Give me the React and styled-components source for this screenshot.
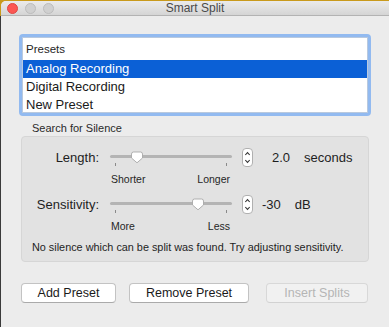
import React from 'react';
import styled, { createGlobalStyle } from 'styled-components';

const Global = createGlobalStyle`
  html, body {
    margin: 0;
    padding: 0;
  }
  body {
    width: 389px;
    height: 327px;
    overflow: hidden;
    background: linear-gradient(to bottom, #c99a1c 0, #c99a1c 16px, #3a3a3a 16px);
    font-family: "Liberation Sans", Arial, sans-serif;
  }
`;

const Window = styled.div`
  margin: 1px 0 0 1px;
  height: 326px;
  background: #ececec;
  border-top-left-radius: 5px;
  display: flex;
  flex-direction: column;
  color: #222;
`;

const TitleBar = styled.div`
  height: 14px;
  border-bottom: 1px solid #b3b3b3;
  background: linear-gradient(to bottom, #ebebeb, #d5d5d5);
  border-top-left-radius: 5px;
  display: flex;
  align-items: center;
  position: relative;
`;

const Lights = styled.div`
  display: flex;
  gap: 7px;
  padding-left: 6px;
`;

const Light = styled.span`
  width: 11px;
  height: 11px;
  border-radius: 50%;
  box-sizing: border-box;
  background: ${p => (p.red ? '#fc5753' : '#d0d0d0')};
  border: 1px solid ${p => (p.red ? '#df4744' : '#bdbdbd')};
`;

const Title = styled.div`
  position: absolute;
  left: 0;
  right: 0;
  text-align: center;
  font-size: 12px;
  color: #4a4a4a;
  line-height: 14px;
`;

const Body = styled.div`
  padding: 18px 18px 0 18px;
  display: flex;
  flex-direction: column;
`;

const ListRing = styled.div`
  width: 352px;
  height: 82px;
  box-sizing: border-box;
  border: 3px solid #92baf0;
  border-radius: 4px;
`;

const List = styled.div`
  height: 100%;
  box-sizing: border-box;
  background: #fff;
  border: 1px solid #b9c9de;
  overflow: hidden;
`;

const ListHeader = styled.div`
  height: 22px;
  padding-left: 3px;
  font-size: 11.5px;
  line-height: 22px;
  color: #262626;
`;

const ListRow = styled.div`
  height: 18px;
  padding-left: 3px;
  font-size: 13px;
  line-height: 18px;
  background: ${p => (p.selected ? '#0b60d6' : 'transparent')};
  color: ${p => (p.selected ? '#fff' : '#1a1a1a')};
`;

const GroupTitle = styled.div`
  margin: 5px 0 0 13px;
  font-size: 11px;
  line-height: 14px;
  color: #2a2a2a;
`;

const Group = styled.div`
  margin: 1px 2px 0 2px;
  height: 126px;
  box-sizing: border-box;
  background: #e2e2e2;
  border: 1px solid #d6d6d6;
  border-radius: 4px;
  padding-top: 11px;
  display: flex;
  flex-direction: column;
`;

const Row = styled.div`
  display: flex;
  align-items: flex-start;
  margin-bottom: ${p => p.gap || 0}px;
`;

const Label = styled.div`
  width: 77px;
  text-align: right;
  font-size: 13px;
  line-height: 19px;
  color: #1e1e1e;
`;

const SliderBox = styled.div`
  margin-left: 11px;
  width: 122px;
  display: flex;
  flex-direction: column;
`;

const TrackArea = styled.div`
  position: relative;
  height: 19px;
`;

const Track = styled.div`
  position: absolute;
  left: 0;
  right: 0;
  top: 7px;
  height: 3px;
  border-radius: 2px;
  background: #b4b4b4;
`;

const Tick = styled.div`
  position: absolute;
  top: 15px;
  left: ${p => p.x}px;
  width: 1px;
  height: 3px;
  background: #8a8a8a;
`;

const Thumb = styled.svg`
  position: absolute;
  top: 3px;
  left: ${p => p.x - 7}px;
`;

const Ends = styled.div`
  display: flex;
  justify-content: space-between;
  padding: 6px 2px 0 1px;
  font-size: 10.5px;
  line-height: 12px;
  color: #262626;
`;

const Stepper = styled.svg`
  margin-left: 10px;
  flex-shrink: 0;
`;

const Value = styled.div`
  margin-left: ${p => p.lead}px;
  font-size: 13px;
  line-height: 19px;
  color: #1e1e1e;
`;

const Unit = styled.div`
  margin-left: 14px;
  font-size: 13px;
  line-height: 19px;
  color: #1e1e1e;
`;

const Message = styled.div`
  margin: 0 0 0 10px;
  font-size: 10.85px;
  line-height: 14px;
  color: #1e1e1e;
  white-space: nowrap;
`;

const Buttons = styled.div`
  margin: 21px 0 0 2px;
  display: flex;
`;

const Button = styled.button`
  width: ${p => p.w}px;
  margin-left: ${p => p.lead || 0}px;
  height: 20px;
  padding: 0;
  box-sizing: border-box;
  font-family: "Liberation Sans", Arial, sans-serif;
  font-size: 12.5px;
  border-radius: 4px;
  background: ${p => (p.disabled ? '#f1f1f1' : '#fff')};
  color: ${p => (p.disabled ? '#b5b5b5' : '#1a1a1a')};
  border: 1px solid ${p => (p.disabled ? '#d8d8d8' : '#c3c3c3')};
  border-bottom-color: ${p => (p.disabled ? '#d2d2d2' : '#aaaaaa')};
`;

function ThumbIcon({ x }) {
  return (
    <Thumb x={x} width="14" height="13" viewBox="0 0 14 13">
      <path
        d="M1.5 3 Q1.5 1 3.5 1 H10.5 Q12.5 1 12.5 3 V7 L7 11.8 L1.5 7 Z"
        fill="#fff"
        stroke="#a8a8a8"
        strokeWidth="0.9"
      />
    </Thumb>
  );
}

function StepperIcon() {
  return (
    <Stepper width="11" height="19" viewBox="0 0 11 19">
      <rect x="0.5" y="0.5" width="10" height="18" rx="3.5" fill="#fff" stroke="#b0b0b0" />
      <path d="M3.3 7 L5.5 4.6 L7.7 7" fill="none" stroke="#333" strokeWidth="1.1" />
      <path d="M3.3 12 L5.5 14.4 L7.7 12" fill="none" stroke="#333" strokeWidth="1.1" />
    </Stepper>
  );
}

function SliderRow({ label, pos, low, high, value, lead, unit, gap }) {
  return (
    <Row gap={gap}>
      <Label>{label}</Label>
      <SliderBox>
        <TrackArea>
          <Track />
          <Tick x={5} />
          <Tick x={116} />
          <ThumbIcon x={pos} />
        </TrackArea>
        <Ends>
          <span>{low}</span>
          <span>{high}</span>
        </Ends>
      </SliderBox>
      <StepperIcon />
      <Value lead={lead}>{value}</Value>
      <Unit>{unit}</Unit>
    </Row>
  );
}

export default function App() {
  return (
    <>
      <Global />
      <Window>
        <TitleBar>
          <Lights>
            <Light red />
            <Light />
            <Light />
          </Lights>
          <Title>Smart Split</Title>
        </TitleBar>
        <Body>
          <ListRing>
            <List>
              <ListHeader>Presets</ListHeader>
              <ListRow selected>Analog Recording</ListRow>
              <ListRow>Digital Recording</ListRow>
              <ListRow>New Preset</ListRow>
            </List>
          </ListRing>
          <GroupTitle>Search for Silence</GroupTitle>
          <Group>
            <SliderRow
              label="Length:"
              pos={27}
              low="Shorter"
              high="Longer"
              value="2.0"
              lead={19}
              unit="seconds"
              gap={10}
            />
            <SliderRow
              label="Sensitivity:"
              pos={88}
              low="More"
              high="Less"
              value="-30"
              lead={9}
              unit="dB"
              gap={8}
            />
            <Message>No silence which can be split was found. Try adjusting sensitivity.</Message>
          </Group>
          <Buttons>
            <Button w={95}>Add Preset</Button>
            <Button w={120} lead={13}>Remove Preset</Button>
            <Button w={102} lead={17} disabled>Insert Splits</Button>
          </Buttons>
        </Body>
      </Window>
    </>
  );
}
